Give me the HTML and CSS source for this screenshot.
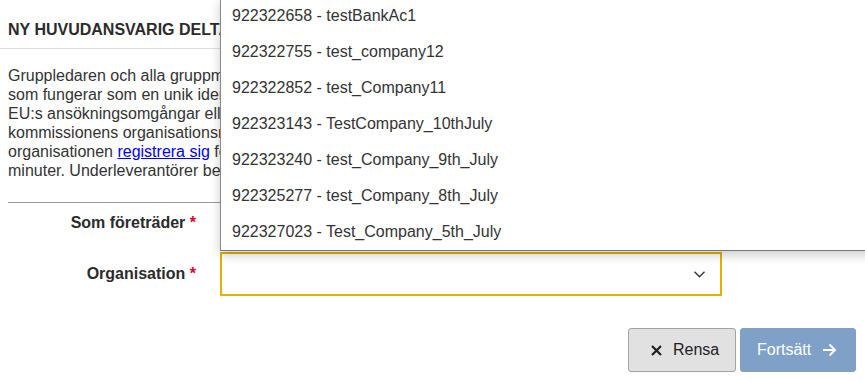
FILE: index.html
```html
<!DOCTYPE html>
<html lang="sv">
<head>
  <meta charset="UTF-8" />
  <meta name="viewport" content="width=device-width, initial-scale=1.0"/>
  <title>Ny huvudansvarig deltagare</title>
  <link rel="stylesheet" href="styles.css">
</head>
<body>

<div class="page">
  <div class="panel-head">
    <h2>NY HUVUDANSVARIG DELTAGARE</h2>
  </div>

  <div class="panel-body">
    <p class="intro">
      Gruppledaren och alla gruppmedlemmar måste ha ett identifieringsnummer för deltagare (PIC-nummer),<br>
      som fungerar som en unik identifierare för organisationer som deltar i EU-program och används i alla<br>
      EU:s ansökningsomgångar eller upphandlingar. Om organisationen redan finns i Europeiska<br>
      kommissionens organisationsregister kan du söka efter den här. Om inte, måste en representant för<br>
      organisationen <a href="#">registrera sig</a> först i deltagarregistret. Registreringen tar bara några<br>
      minuter. Underleverantörer behöver inte registreras.
    </p>

    <hr class="divider">

    <form class="form">
      <div class="row row-first">
        <label>Som företräder <span class="req">*</span></label>
        <div class="field">
          <div class="choice">Huvudansvarig deltagare</div>
        </div>
      </div>
      <div class="row">
        <label>Organisation <span class="req">*</span></label>
        <div class="field">
          <div class="select">
            <svg class="chevron" width="11" height="7" viewBox="0 0 11 7">
              <polyline points="0.5,0.8 5.5,5.8 10.5,0.8" fill="none" stroke="#333" stroke-width="1.3"/>
            </svg>
          </div>
        </div>
      </div>
    </form>

    <div class="actions">
      <button class="btn btn-clear" type="button">
        <svg class="x" width="11" height="11" viewBox="0 0 11 11">
          <path d="M1 1 L10 10 M10 1 L1 10" stroke="#222" stroke-width="2.2"/>
        </svg>
        Rensa
      </button>
      <button class="btn btn-next" type="button">
        Fortsätt
        <svg class="arrow" width="15" height="14" viewBox="0 0 15 14">
          <path d="M1 7 H13 M7.5 1.5 L13 7 L7.5 12.5" fill="none" stroke="#fff" stroke-width="2"/>
        </svg>
      </button>
    </div>
  </div>

  <ul class="dropdown">
    <li>922322658 - testBankAc1</li>
    <li>922322755 - test_company12</li>
    <li>922322852 - test_Company11</li>
    <li>922323143 - TestCompany_10thJuly</li>
    <li>922323240 - test_Company_9th_July</li>
    <li>922325277 - test_Company_8th_July</li>
    <li>922327023 - Test_Company_5th_July</li>
  </ul>
</div>

</body>
</html>
```

FILE: styles.css
```css
* {
  margin: 0;
  padding: 0;
  box-sizing: border-box;
}

html, body {
  font-family: 'Liberation Sans', Arial, sans-serif;
  font-size: 16px;
  color: #333;
  background: #fff;
  overflow: hidden;
}

.page {
  position: relative;
  width: 865px;
  height: 381px;
}

.panel-head {
  padding: 21px 8px 9px;
  border-bottom: 1px solid #ddd;
}

.panel-head h2 {
  font-size: 16px;
  line-height: 18px;
  font-weight: bold;
  color: #2b2b2b;
  white-space: nowrap;
}

.panel-body {
  padding: 0 9px 0 8px;
}

.intro {
  padding-top: 17px;
  line-height: 19px;
  white-space: nowrap;
}

.intro a {
  color: #0000ee;
}

.divider {
  border: 0;
  border-top: 1px solid #999;
  margin-top: 22px;
}

.row {
  display: flex;
  align-items: center;
}

.row-first {
  height: 40px;
  margin-bottom: 9px;
}

.row label {
  width: 196px;
  padding-right: 8px;
  text-align: right;
  font-weight: bold;
  color: #2b2b2b;
}

.req {
  color: #e0002a;
}

.field {
  margin-left: 16px;
  width: 502px;
}

.select {
  height: 44px;
  border: 2px solid #e5b000;
  display: flex;
  align-items: center;
  justify-content: flex-end;
  padding-right: 15px;
}

.actions {
  display: flex;
  justify-content: flex-end;
  gap: 4px;
  margin-top: 32px;
}

.btn {
  font-family: inherit;
  font-size: 16px;
  height: 44px;
  border-radius: 3px;
  display: flex;
  align-items: center;
}

.btn-clear {
  width: 108px;
  padding-left: 22px;
  background: #e1e1e1;
  border: 1px solid #a3a3a3;
  color: #222;
}

.btn-clear .x {
  margin-right: 11px;
}

.btn-next {
  width: 116px;
  padding-left: 16px;
  background: #7fa1c8;
  border: 1px solid #7fa1c8;
  color: #fff;
}

.btn-next .arrow {
  margin-left: 11px;
}

.dropdown {
  position: absolute;
  top: -2px;
  left: 220px;
  width: 680px;
  list-style: none;
  background: #fff;
  border-left: 1px solid #888;
  border-bottom: 1px solid #777;
  box-shadow: 0 4px 10px rgba(0, 0, 0, 0.2);
}

.dropdown li {
  height: 36px;
  line-height: 36px;
  padding-left: 11px;
  color: #333;
}
```
